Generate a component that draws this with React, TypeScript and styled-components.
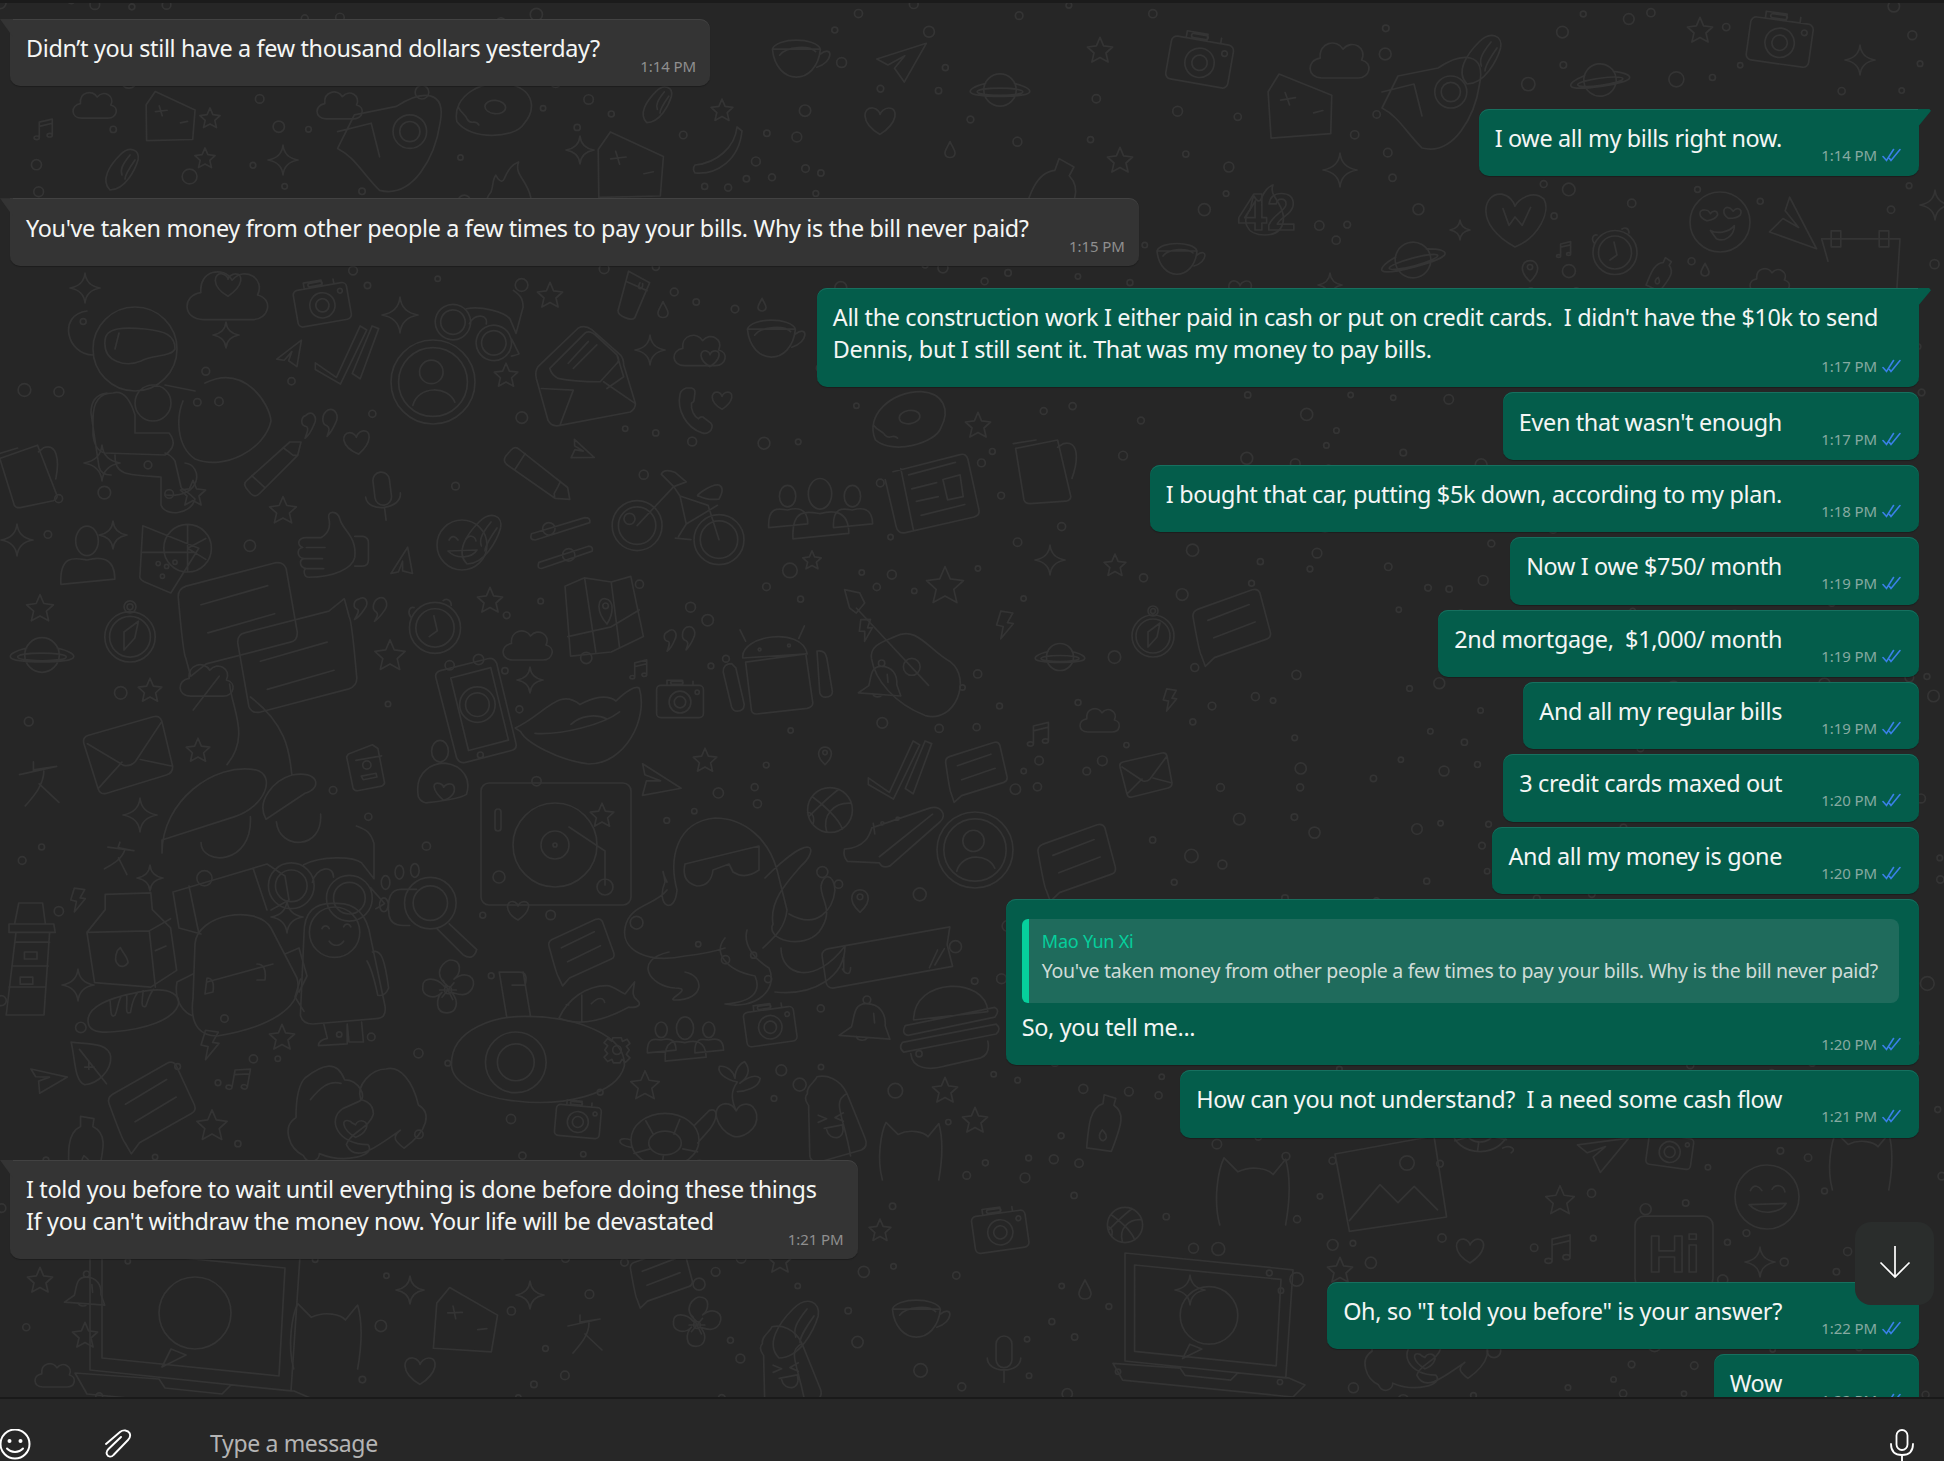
import React from "react";
import styled, { createGlobalStyle } from "styled-components";

const c = (x: number, y: number, r: number) => `M${x - r} ${y}a${r} ${r} 0 1 0 ${2 * r} 0a${r} ${r} 0 1 0 ${-2 * r} 0`;
const e = (x: number, y: number, a: number, b: number) => `M${x - a} ${y}a${a} ${b} 0 1 0 ${2 * a} 0a${a} ${b} 0 1 0 ${-2 * a} 0`;
const rr = (x: number, y: number, w: number, h: number, r: number) =>
  `M${x + r} ${y}h${w - 2 * r}a${r} ${r} 0 0 1 ${r} ${r}v${h - 2 * r}a${r} ${r} 0 0 1 ${-r} ${r}h${-(w - 2 * r)}a${r} ${r} 0 0 1 ${-r} ${-r}v${-(h - 2 * r)}a${r} ${r} 0 0 1 ${r} ${-r}Z`;

const person = (x: number, y: number, s: number) =>
  e(x, y - 22 * s, 13 * s, 17 * s) + `M${x - 30 * s} ${y + 28 * s}C${x - 32 * s} ${y - 8 * s} ${x - 12 * s} ${y - 2 * s} ${x} ${y}C${x + 14 * s} ${y - 4 * s} ${x + 32 * s} ${y - 4 * s} ${x + 32 * s} ${y + 22 * s}Z`;

const S: Record<string, string> = {
  star: "M0-42L12-14L42-10L20 10L27 40L0 25L-27 40L-20 10L-42-10L-12-14Z",
  sparkle: "M0-50Q4-8 50 0Q4 8 0 50Q-4 8-50 0Q-4-8 0-50Z",
  heart: "M0 36C-52 6-42-34-17-30C-6-28 0-18 0-14C2-20 10-30 22-30C46-30 46 6 0 36Z",
  cloud: "M-30 30C-56 30-56 0-33-3C-36-30-5-36 5-18C20-36 46-20 36 0C56 5 50 30 30 30Z",
  drop: "M0-42C15-10 28 5 25 18C20 44-20 44-25 18C-28 5-15-10 0-42Z",
  planet: c(0, 0, 27) + "M-24 -11C-44-6-52 0-49 4C-44 13 44 13 49 4C52 0 44-6 24-11" + e(0, 3, 38, 6),
  camera: rr(-45, -28, 90, 62, 8) + "M-25-28v-10h30v10M25-28v-8" + c(0, 4, 21) + c(0, 4, 11) + c(33, -15, 4) + rr(-18, -36, 24, 6, 3),
  check: "M-48 12L-16 34L20-44L30-38L-10 44L-48 22ZM8 28L20 36L48-40L38-44Z",
  paperplane: "M-46 6L46-42L16 42L-8 18L8-10L-22 14Z",
  chat: "M-42-30L40-44Q48-45 50-38L55 20Q55 28 48 29L-30 42L-45 52L-48 35Q-50 32-50-20Q-50-28-42-30ZM-30-12L32-24M-26 14L36 2",
  person: person(0, 0, 1.5),
  group: person(0, 4, 1) + person(-36, 0, .7) + person(36, 0, .7),
  pin: "M0 48C-30 20-36 0-30-18C-20-46 20-46 30-18C36 0 30 20 0 48Z" + c(0, -12, 11),
  profile: c(0, 0, 50) + c(0, 0, 41) + c(-2, -12, 14) + "M-24 28C-18 4 18 4 26 24",
  bolt: "M-14-46L26-40L8-8L28-5L-14 46L-6 5L-28 0Z",
  note: "M-22 30V-30L28-42V20M-22-14L28-26" + e(-32, 30, 10, 7) + e(18, 20, 10, 7),
  quotes: "M-32-22C-18-36-4-18-14 0C-20 14-28 26-34 30C-28 14-26 8-30 4C-46 2-44-18-32-22ZM18-34C34-40 44-22 36-6C30 8 24 18 16 26C22 10 22 6 16 2C2-2 4-26 18-34Z",
  pencil: "M30-50L50-50L44-26L-24 42Q-32 50-40 42L-48 32Q-54 24-46 18ZM-38 10L-14 32M18-40L26-34L36-26L42-26",
  mic: rr(-18, -50, 36, 72, 18) + "M-38 0C-38 36 38 36 38 0M0 30V55",
  thumb: "M-30-12H-6C4-18 10-28 6-44C4-56 20-56 24-42C28-24 52-14 48 20C44 38 14 52-26 52C-34 52-36 40-30 38C-42 36-42 24-34 22C-46 20-46 6-36 4C-46 0-44-12-30-12ZM-30 4H0M-34 22H-4M-30 38H-2M48-14H62Q70-12 70-4V24Q70 34 60 34H48",
  mug: "M-44-36L26-50L48 44Q48 50 40 52L-20 56Q-28 56-30 50ZM26-38L36-44C60-50 62-20 50 14M-48-44L-10-50",
  cocktail: "M-46-46L34-14L-6 50L-44 34Q-52 30-50 24ZM-46-8L28-8" + c(18, -14, 34) + "M18-14L18-46M18-14L44-28M18-14L44 2M18-14L18 18" + c(-24, 8, 3) + c(-12, 12, 3) + c(0, 6, 3) + c(-18, 26, 3),
  compass: c(0, 8, 42) + c(0, 8, 34) + c(0, -42, 10) + c(0, -42, 5) + "M-10 30L-10 0L14-18L8 10Z",
  clock: c(0, 5, 44) + c(0, 5, 33) + "M-2-16L4 10L-10 20M-36-30C-44-32-48-22-42-14M14-42C20-46 28-44 28-34",
  cup: "M-46-18C-40 44 28 44 34-18ZM-46-18C-40-38 28-38 34-18ZM-34-8C-22-24 16-24 26-14M34-10C56-26 56 4 28 12",
  envelope: "M-48-26L30-44Q38-46 40-38L50 16Q50 24 42 26L-30 44Q-38 46-40 38L-54-16Q-56-24-48-26ZM-50-16L-8 12Q0 14 6 8L40-38M-40 38L-10 8M50 16L12 6",
  bigenvelope: "M-50-4L-2-50Q6-54 14-48L48-18Q52-14 52-6L66 40Q66 46 60 50L-24 66Q-34 68-38 60L-52 10Q-54 2-50-4ZM-36-2L6-44Q12-48 20-40L44-18Q48-12 44-8L24 14Q-8 14-26 10Q-34 6-36-2ZM-46 22L-8 24L-24 66M28 14L66 40M-14-8L10-34M-8-2L20-30M44-18L52 8L32 22",
  handset: "M-20-50L-8-50Q0-48 0-40L-2-24Q-2-18-8-16C-10 0-2 14 8 20Q12 14 18 16L36 30Q42 36 36 46Q28 56 16 52C-20 40-42 0-34-36Q-32-46-20-50Z",
  bike: c(-55, 20, 32) + c(-55, 20, 24) + c(50, 38, 32) + c(50, 38, 24) + "M-55 20L-8-30L-24-46Q-20-54-6-48L8-36L-8-30L0-18L36-6M0-18L8 18L48-6M24-18C16-16 40-34 50-32Q58-28 50-14Q36-12 24-18M36-6L50 38M8 18L-2 34M-6 36L14 38",
  news: "M-50-26L36-48Q44-50 46-42L60 22Q62 30 54 32L-34 52Q-44 54-46 44L-60-16M-40-30L-24 48M-30-22L30-38M-26-4L6-12M-20 12L8 6M-14 30L42 16M14-16L36-22L40 6L20 10Z",
  sliders: "M-46-10L40-36Q50-36 48-28L-40 0Q-50 0-46-10Z" + c(-18, -18, 10) + "M-34 36L46 10Q54 10 52 18L-30 46Q-38 46-34 36Z" + c(14, 24, 10),
  map: "M-50-34L-22-46L16-40L44-48L62 38L16 60L-42 66ZM-22-46L-6 60M16-40L28 54M-46 38L16 24L56 0M10 20C-6 2-4-18 8-16C20-14 20 4 10 20Z" + c(8, -6, 4),
  guitar: "M-66-66L-48-62L-42-50L-52-38L-60-44ZM-52-44L34 48M-6 -10C20-24 34 6 60 20C86 40 66 94 30 84C-6 70-30 42-34 16C-36 0-20-4-6-10Z" + c(14, 26, 10),
  android: "M-42-34L-50-50M34-38L42-56M-46-10C-50-42 38-56 46-16ZM-42-4L44-16L54 54Q54 60 46 62L-26 70Q-34 70-34 62ZM-74 10Q-74-2-62-2L-56 4L-44 56Q-44 66-54 66Q-60 66-62 60ZM60-20Q72-22 74-10L82 38Q82 46 72 46Q66 46 64 40Z" + c(-22, -22, 2) + c(20, -28, 2),
  bell: c(4, -42, 8) + "M2-34C-24-34-22-6-28 14L-54 32L52 40L42 12C44-12 32-34 2-34ZM-18 34C-16 44 0 44 4 38M18-14L20 6",
  lips: "M-72 0C-40-14-24-46 0-26C14-34 30-38 40-30C50-40 62-48 66-44C76-10 50 40 10 40C-24 36-60 16-66 4ZM-50 6C-20 8 26-4 44-18M-10-4C0-14 18-16 30-10",
  turntable: rr(-74, -62, 150, 122, 8) + c(0, 0, 42) + c(0, 0, 14) + c(0, 0, 2) + "M14-18L50 6V40" + c(50, 42, 8) + c(-56, 32, 6) + rr(-60, -36, 6, 22, 3),
  octopus: "M-48 10C-56-20-50-58-10-62C20-62 44-40 52-10L62 30C60 50 46 60 38 68M-48 10C-50 36-70 26-60 2C-62-14-64-10-58 2M-58 10C-70 26-96 24-100 48C-104 70-78 84-40 76C-22 74-6 70 0 68M-40-16L34-34L34-10Q20 0 8-8L4-16L-12-10Q-14 6-28 6Q-44 2-40-16ZM-56 72C-92 80-76 106-50 108C-30 108-60 120-50 120C-20 120-20 96-40 92M0 58C-12 72 0 90 30 96C36 110 30 122 0 124C30 130 54 110 44 88C28 78 18 64 22 50M64 34C92 50 108 30 110 10C108-8 98-6 96 6C96 22 110 30 94 52C78 70 40 60 48 44C44 20 64 0 76-14C94-30 90-52 40-2M56 68C56 96 90 106 120 66C120 96 90 116 50 112",
  ball: c(0, 0, 40) + "M-32-24C-10-8 16 16 22 34M-38 12C-10-16 6-30 16-37M-6 38C-14 10 6-14 38-12M-30 24C-26 8-36 4-40 4",
  shoe: "M-60 12C-30 10-26-10-24-16L52-42C66-46 76-34 66-24L0 34Q-10 38-14 30L-56 28Q-62 22-60 12ZM-22-22L-20-8M-14 22L56-34" + c(-10, -22, 2) + c(10, -28, 2),
  audio: "M-90-2L88-34L84-8L92 24L-84 56Q-92 56-94 48L-100 8Q-100 0-90-2ZM-68 10V30M-70 28C-64 38-58 36-58 26M70 0L58 26M80-2L66 22",
  burger: "M-52 0C-52-62 52-62 54 -12ZM-64 8L64-18Q72-14 64-4L-60 22Q-70 20-64 8ZM-68 32L66 6Q74 12 66 20L-66 46Q-74 40-68 32ZM-56 48C-54 70-30 72-8 66L44 54C54 50 56 40 54 30",
  fish: "M-60 30C-46 0-16-24 20-24C30-24 40-14 50-10L66-30C64-16 60-8 70 0C78 6 74 14 56 12C30 26-20 48-60 30ZM-22-8V36M-48 8L-44 8M-6 6C6-6 14-4 16 4",
  gear: c(0, 0, 12) + "M-12-34L12-34L15-24L28-30L36-18L26-10L34 0L26 12L36 22L24 34L14 26L8 36H-10L-14 26L-26 32L-36 20L-26 10L-34 0L-26-12L-36-20L-26-32L-14-24Z",
  submarine: "M-80 10C-80-30-30-42 0-42C60-42 110-20 108 12C100 44 40 56-10 50C-50 46-80 30-80 10Z" + c(-10, 8, 33) + c(-10, 8, 20) + "M-20-42L-28-90H-6Q4-90 0-76H-14M-2-90L6-42",
  turtle: e(0, 0, 46, 36) + e(0, 4, 22, 16) + "M-26-26L-16-8M20-28L12-8M-42 18L-20 12M44 16L24 12M-4 34L-2 20M40-20L60-40C72-44 72-30 60-14L44 4M-46 0C-64-6-68 6-46 10M38 30C50 24 62 32 52 38",
  plant: "M-4 60C-30 50-44 10-16 6C-8 6-2 10 2 18C8 4 30 0 36 24C40 50 10 66-4 60ZM2 18C-6 0-8-14 4-30C-16-34-30-46-26-56C-12-58-2-46 0-36C0-52 10-62 16-64C28-50 20-36 8-28C24-40 36-42 42-36C40-20 16-14 4-14",
  ice: "M-30-72C-36-60-48-56-46-44C-54-36-46-28-44-24L-42 60Q-40 72-26 70L44 50Q56 44 50 30L20-44C8-70-16-76-30-72ZM20-44C-6-30 14-10 26 60M-28-8L-14-2L-28 4M14-12L0-4L14 2M-18 14L12 8C20 34-10 36-14 16",
  laptop: "M-70-60L70-46L64 44L-70 30ZM-62-50L60-38L56 34L-62 22ZM-80 32L-72 46L70 60L80 50L66 44L24 40L18 46L-20 42L-24 36Z" + c(0, -8, 24) + "M-16 16L-22 28L-6 20Z",
  astronaut: c(0, -36, 42) + "M-30-44C-30-58-10-58 10-56C30-54 40-50 40-36C36-28 16-30 6-24C-8-18-32-22-30-44ZM-16-52L-20-36M-42-30C-68-30-78-70-48-74M-28 8Q-44 10-44 28L-36 82Q-34 90-24 90M-22 8Q-8 4 0 30V48H34Q44 60 30 70L-30 68Q-40 66-42 50V34Q-42 8-22 8ZM-20 70C-20 90-10 90 26 92V120C30 132 56 130 60 114C50 104 46 104 46 102L40 76C36 70 30 68 30 68M30 110C68 114 68 80 50 78M30 0L60 6M70 -2C110-22 135 20 136 36C130 64 90 86 60 74C40 60 42 30 48 16" + c(18, 18, 18),
  scooter: "M-8-70C-6-50 8-30-10-8M-16-76L-36-50M8-60C40-36 38-10 40 0M-60 60C-60 20-20-10 12-4C28 0 20 24-4 32L-60 50ZM40 0C60-4 64 10 50 14L20 34C12 20 26 4 40 0ZM-30 52C-30 70 10 70 8 32M28 36C30 58 64 58 62 30",
  passport: "M-36-24L16-44L28-36L42 36Q44 42 36 46L-16 56Q-24 56-26 50L-40-18ZM-20-10L36-20M-8 24L24 18L26 26L-4 32Z" + c(4, 0, 9),
  heartperson: e(0, -48, 14, 18) + "M-36 28C-44-16-10-28 8-28C40-24 52 0 44 24C36 30 0 36-24 38Q-32 36-36 28ZM6 34C-14 16-14 2 0 6C4 8 6 10 6 12C10 6 24 2 24 16C24 26 12 32 6 34Z",
  phone: "M-40-60L24-76Q32-78 36-70L62 38Q64 46 56 48L-6 64Q-14 66-18 58L-46-50Q-48-58-40-60ZM-26-50L28-64L52 34L-2 48Z" + c(14, 54, 4) + c(10, -14, 24) + c(10, -14, 16),
  translate: "M-20-40V-26L20-32M-44-18L20-32M-2-24C-2 0-20 20-34 36M-10-2L24 30",
  glasses: c(-44, 18, 26) + c(-44, 18, 18) + c(22, 32, 26) + c(22, 32, 18) + "M-30-6C-10-16 26-16 36-8L50 10L50-30C46-44 40-46 30-50M-20 14C-16-4 4-6 4 8M46 20L62 38Q60 40 52 44",
  backpack: "M-42-4C-40-34 20-44 34-20L60 30C68 60 30 80-20 88C-34 88-48 80-44 50ZM-44 26L-60 34C-64 56-50 66-44 68M48 6L62 0L70 28L62 44M-30 34L36 16M-30 30Q-22 30-24 44L-32 46ZM20 16Q30 16 28 32H20M-64-56L30-84L48-72L52-48L34-38M-64-56L-58-20L-36-14M-48-62L-38-14M16-80L30-38",
  magnify: c(12, -8, 30) + c(12, -8, 20) + "M34 16L66 46Q62 60 50 52L20 22M-22-24H-4M-22-24Q-40-24-36 6Q-34 18-20 18H-12" + e(-24, -44, 5, 8) + e(-6, -46, 5, 8) + e(-40, -32, 5, 8) + e(-42, -6, 5, 8),
  lighthouse: "M-16-70H18L22-40H-22ZM-30-40H34L36-28H-30ZM-20-28L28-28L20 90H-34ZM-22-14H28M-26 20H26M-30 50H22M-8 0L10 0L10 10L-8 10ZM-14 36L4 36L4 46L-14 46Z",
  milk: "M-30-60L30-62L32-40L56-16L64 40L30 62L-44 56L-54-10L-30-40ZM-54-10L28-12L56-28M28-12L36 62M-14 14C-22 34-6 40 0 30C0 22-8 16-10 10ZM36 14L50 8",
  astro2: c(-6, -42, 28) + "M-40-40Q-40-76-6-74Q28-76 34-36L50 40Q52 54 40 54L-30 60Q-42 60-44 50ZM-44 10L-50 30L-40 46M36-20C46-24 50-10 54 20Q50 30 42 28Q36 0 30-10M-18 60L-14 76Q-24 78-24 84L8 82L8 60M8 60L10 80L26 80L24 58M-20-46C-18-50-14-50-12-46M4-48C6-52 10-52 12-48M-12-32C-8-26 0-26 4-32",
  flower: c(0, 0, 6) + "M0-6C-30-30-4-50 4-50C24-50 22-28 10-18C30-34 50-20 40-2C30 14 14 6 6 4C20 20 14 38-2 38C-22 38-20 14-10 4C-24 18-44 10-42-6C-42-22-20-22-6-6ZM-14 0H14M-8-16L8 16M10-12L-10 12",
  bread: "M-70 20C-74-4-40-20 20-30C60-36 76-22 70-6C60 16 20 30-30 34C-50 36-68 34-70 20ZM-36-16C-34 0-36 14-28 8C-24 0-24-12-18-22M-10-24C-8-8-14 8-4 4C-2-4-2-16 8-28M16-30C14-14 12-2 20-6C22-10 24-22 32-32",
  leaf: "M-42-44C-10-40 30-44 34-16C36 10 10 36-16 38C-36 30-34-10-42-44ZM-26-30L26 36M-8-8V8M2 4H-16",
  hands: "M-6-28C-14-50-30-46-50-30C-60-20-60 6-60 14C-76 24-68 48-52 56C-46 68-34 62-34 54C-6 66 30 56 20 44C-14 44-26 16-8 4L10-4C20-8 10-28-6-28ZM-44-6C-34-18-24-28-10-24M12-6C6-22 24-40 40-40C56-44 70-26 76 0C90 8 88 28 60 48C50 40 46 36 56 28C30 46 6 66-4 44C0 30 22 26 26 10C26-4 12-6 12-6ZM6 36C-10 26-10 14 0 18C2 20 6 22 6 22C10 14 22 18 18 26C14 34 10 34 6 36Z",
  smiley: c(0, 0, 50) + "M-26-10C-20-22-12-16-8-10M8-12C14-22 26-18 28-8M-28 12C-10 30 20 26 30 10Z",
  love: c(0, 0, 50) + "M-22-2C-38-8-36-22-24-20C-18-20-18-16-16-14C-12-20-4-20-4-12Q-8-4-22-2ZM14-6C2-14 6-26 14-24C18-24 20-20 22-18C28-26 38-22 34-12Q28-6 14-6ZM-16 14C-6 20 14 18 24 6C24 24 6 34-6 28Z",
  donut: "M-50 20C-60-14-20-42 20-36C50-30 56-6 40 16C30 36-30 44-50 20Z" + e(0, -4, 14, 9) + "M-50 0C-44 10-40 8-36 16C-30 24-26 14-20 22",
  rocket: "M10-40C40-60 70-60 62-20C56 20 30 70-10 60C-30 40-40 20-60 10L-40-30ZM-60-10L-20-20L-10 20" + c(26, -10, 20) + c(26, -10, 12),
  flame: "M0 50C-40 50-46 20-30 0C-26-10-28-20-22-28C-16-16-10-16-8-22C0-40 6-46 16-50C8-30 30-20 36 8C40 30 30 50 0 50Z",
  banana: "M-44 46C0 50 44 20 50-38L40-46C36-6 0 26-44 30Q-50 38-44 46Z",
  hand: "M-30 40C-50 20-30-10-10-30C10-50 30-40 26-20C20 0 0 40-30 40ZM10-30C-6-10-10 0-6 10M20-20C6 0 0 10 0 18",
  doc: "M-40-44L40-30L50 24L-32 48L-50-16ZM-26-20L-16-4M-30-8L-10-16M20 0L32-6",
  card: rr(-50, -46, 100, 92, 12),
  bottle: "M-8-60L16-56L14-42C38-30 36-10 22 50H-28C-30 10-34-30-8-42ZM-2 10C-14 30 6 38 8 24C8 16 2 14-2 10Z",
  tube: "M-26-54L22-28L-12 52C-20 60-50 48-50 36ZM-30-30L16-10M0-28C-10-10 8-10 6-26",
  mountain: "M-60-40L50-60L64 30L-44 46ZM-44 34L-10-6L10 14L28-4L54 22" + c(20, -30, 8),
  cat: "M-46 50C-56 14-48-30-40-46L-20-26C0-36 24-30 30-22L48-44C56-16 54 16 48 50",
  wheart: "M0 50C-70 12-52-42-22-38C-10-36-2-26 0-18C6-30 30-46 48-30C60-10 40 34 0 50ZM-20-14L-10 14L0 0L12 14L26-16",
  dumbbell: "M-30-14L30-14M-36-24H-24V-4H-36ZM24-24H36V-4H24ZM-40 14L-48-14L50-14L46 50",
};

type Placement = [string, number, number, number, number?];
const PLACEMENTS: Placement[] = [
  ["astronaut", 135, 385, 100], ["cloud", 228, 295, 82], ["heart", 228, 284, 34], ["camera", 322, 303, 60, -10], ["glasses", 485, 318, 68, 15], ["check", 347, 355, 66], ["paperplane", 290, 355, 30, -10], ["profile", 433, 382, 84], ["quotes", 320, 425, 44], ["heart", 357, 442, 34, -8], ["pencil", 273, 470, 56], ["mic", 383, 495, 46, -7], ["hand", 485, 540, 60], ["smiley", 462, 545, 50], ["mug", 27, 475, 56, -8],
  ["sparkle", 102, 463, 36], ["sparkle", 85, 288, 30], ["sparkle", 400, 315, 36], ["sparkle", 226, 335, 26], ["star", 193, 493, 30], ["star", 283, 510, 32], ["star", 506, 375, 28], ["thumb", 325, 545, 62], ["person", 87, 560, 58], ["sparkle", 113, 535, 28], ["cocktail", 175, 558, 70], ["paperplane", 402, 565, 30, -30], ["chat", 235, 615, 110, -5], ["chat", 300, 660, 110, 175], ["compass", 130, 632, 60], ["quotes", 370, 610, 40, 10], ["clock", 435, 625, 58], ["star", 40, 608, 32], ["star", 490, 600, 30], ["star", 390, 655, 36], ["star", 150, 690, 28], ["planet", 42, 655, 64], ["cloud", 207, 680, 54], ["phone", 470, 715, 74], ["sparkle", 17, 540, 32],
  ["envelope", 130, 755, 84, -3], ["scooter", 240, 775, 130], ["star", 198, 750, 28], ["passport", 365, 765, 46], ["heartperson", 440, 780, 60], ["translate", 45, 785, 58], ["translate", 122, 860, 40, 20], ["sparkle", 140, 815, 34], ["sparkle", 150, 878, 26], ["bolt", 78, 900, 26], ["glasses", 330, 870, 88], ["backpack", 237, 948, 100], ["magnify", 420, 910, 86], ["lighthouse", 30, 952, 70], ["milk", 128, 940, 76], ["astro2", 340, 970, 90], ["flower", 448, 990, 60], ["sparkle", 78, 985, 32], ["sparkle", 287, 917, 32], ["bread", 133, 1010, 64], ["bolt", 210, 1045, 32], ["star", 282, 1037, 30], ["star", 212, 1125, 36], ["hands", 350, 1105, 90], ["leaf", 93, 1065, 52], ["paperplane", 45, 1078, 36, 40], ["chat", 150, 1105, 76, -20], ["note", 240, 1080, 30, 10], ["submarine", 525, 1055, 92], ["bottle", 85, 1150, 56],
  ["bigenvelope", 580, 370, 84], ["tube", 640, 295, 44], ["star", 550, 295, 30], ["drop", 663, 310, 20], ["drop", 762, 305, 16], ["cup", 775, 340, 60], ["sparkle", 650, 350, 30], ["cloud", 700, 350, 52], ["heart", 710, 358, 24], ["handset", 695, 410, 44], ["heart", 722, 400, 26], ["paperplane", 580, 450, 26, 70], ["pencil", 535, 475, 60, 80], ["bike", 680, 510, 78], ["group", 820, 510, 90], ["news", 932, 492, 78], ["sliders", 560, 540, 62], ["map", 600, 610, 70], ["guitar", 900, 645, 84], ["star", 945, 585, 44], ["android", 775, 665, 70], ["cloud", 528, 645, 50], ["quotes", 680, 640, 38], ["note", 640, 670, 24], ["bell", 880, 680, 40], ["sparkle", 530, 680, 26], ["camera", 680, 700, 52], ["star", 812, 560, 22], ["donut", 910, 420, 74, -8], ["star", 978, 425, 30], ["bolt", 866, 630, 24, -10], ["bolt", 1005, 625, 30],
  ["lips", 580, 728, 90], ["turntable", 555, 845, 100], ["star", 602, 815, 28], ["paperplane", 655, 780, 44, 60], ["star", 705, 760, 28], ["pin", 825, 755, 20], ["check", 900, 770, 66], ["chat", 975, 770, 56, -8], ["ball", 830, 810, 56], ["shoe", 890, 840, 76], ["profile", 975, 850, 76], ["audio", 890, 950, 68], ["pin", 860, 900, 26], ["heart", 518, 910, 28], ["chat", 580, 950, 58, -15], ["burger", 950, 1020, 70], ["fish", 595, 1000, 60], ["camera", 770, 1025, 56, -8], ["bell", 865, 1020, 48], ["group", 685, 1040, 66], ["gear", 617, 1050, 36], ["star", 645, 1085, 34], ["plant", 735, 1100, 60], ["turtle", 665, 1140, 74], ["camera", 578, 1120, 50, 5], ["ice", 835, 1120, 60], ["cat", 910, 1150, 60], ["star", 975, 1120, 30], ["star", 945, 1090, 30], ["octopus", 725, 880, 100],
  ["cloud", 95, 105, 44], ["doc", 170, 120, 54, 15], ["rocket", 388, 140, 84], ["donut", 495, 110, 74, 5], ["flame", 509, 192, 60], ["doc", 630, 170, 72, 15], ["banana", 717, 150, 50], ["star", 210, 118, 24], ["star", 205, 158, 24], ["sparkle", 283, 160, 30], ["cloud", 340, 105, 46], ["hand", 125, 170, 50], ["hand", 660, 105, 44], ["note", 45, 130, 26], ["star", 722, 110, 26], ["sparkle", 580, 150, 28],
  ["cup", 800, 60, 60], ["planet", 1000, 90, 60], ["star", 1100, 50, 30], ["paperplane", 900, 60, 50, 10], ["camera", 1200, 60, 70, 10], ["bottle", 1050, 200, 70, 20], ["heart", 880, 120, 40], ["drop", 950, 150, 20], ["star", 1000, 220, 30], ["planet", 1413, 260, 66, -15], ["sparkle", 1340, 170, 34], ["rocket", 1430, 100, 80], ["doc", 1300, 110, 70, 12], ["hand", 1485, 60, 60], ["cloud", 1340, 60, 60], ["planet", 1600, 80, 60, -8], ["camera", 1780, 40, 70, 8], ["sparkle", 1860, 60, 30], ["star", 1700, 30, 30], ["wheart", 1515, 217, 60], ["love", 1720, 222, 60], ["paperplane", 1793, 223, 56, 90], ["clock", 1615, 250, 50], ["note", 1565, 250, 20], ["bottle", 1660, 275, 30, 25], ["dumbbell", 1860, 250, 80], ["sparkle", 1460, 230, 20], ["sparkle", 1935, 205, 30], ["flame", 1265, 210, 50], ["cloud", 1770, 280, 40], ["pin", 1530, 270, 24], ["drop", 1705, 270, 16], ["cup", 1180, 260, 50], ["star", 1120, 160, 30], ["heart", 1240, 290, 30], ["sparkle", 1330, 285, 24],
  ["mug", 1042, 470, 60], ["planet", 1060, 657, 50], ["compass", 1153, 632, 50], ["sparkle", 1050, 560, 30], ["envelope", 1147, 775, 50], ["chat", 1075, 860, 70, -10], ["cloud", 1100, 720, 40], ["note", 1040, 735, 30], ["star", 1115, 565, 26], ["bolt", 1170, 700, 24], ["chat", 1230, 625, 70, -10],
  ["laptop", 195, 1325, 150], ["cat", 325, 1335, 68], ["doc", 465, 1325, 68, 20], ["translate", 590, 1335, 50], ["flower", 697, 1325, 56], ["hand", 800, 1330, 70], ["sparkle", 410, 1290, 28], ["sparkle", 530, 1295, 28], ["star", 85, 1335, 30], ["star", 40, 1280, 30], ["cloud", 55, 1375, 40], ["bell", 85, 1290, 38], ["heart", 420, 1370, 40], ["chat", 660, 1275, 56, -10], ["cup", 920, 1320, 60], ["camera", 1000, 1230, 60, -8], ["bottle", 1104, 1125, 50, 8], ["cat", 1252, 1190, 70], ["mountain", 1389, 1190, 90], ["sparkle", 1190, 1290, 30], ["laptop", 1209, 1325, 120], ["mic", 1004, 1358, 44], ["smiley", 1767, 1197, 64], ["card", 1674, 1252, 78], ["sparkle", 1760, 1262, 30], ["cat", 1860, 1160, 60], ["star", 1340, 1270, 30], ["heart", 1470, 1250, 36], ["star", 1560, 1200, 34], ["ball", 1125, 1225, 44], ["drop", 1085, 1290, 24], ["star", 880, 1230, 26], ["star", 780, 1260, 30], ["note", 1560, 1250, 36], ["paperplane", 1600, 1150, 50, 20], ["turtle", 1480, 1130, 60], ["camera", 1670, 1150, 50, 8], ["hands", 1420, 1340, 80], ["ice", 790, 1370, 60],
];

function makeDots() {
  let seed = 4217;
  const rnd = () => ((seed = (seed * 16807) % 2147483647) - 1) / 2147483646;
  const dots: [number, number, number][] = [];
  for (let i = 0; i < 9000 && dots.length < 720; i++) {
    const x = rnd() * 1944;
    const y = rnd() * 1400;
    const r = 2.6 + rnd() * rnd() * 5.5;
    const hit = PLACEMENTS.some(p => Math.hypot(p[1] - x, p[2] - y) < p[3] * .56 + r + 2) || dots.some(d => Math.hypot(d[0] - x, d[1] - y) < d[2] + r + 9);
    if (!hit) dots.push([x, y, r]);
  }
  return dots;
}
const DOTS = makeDots();

const GlobalStyle = createGlobalStyle`
  html, body { margin: 0; padding: 0; background: #fff; }
  body { font-family: "Noto Sans", "Open Sans", sans-serif; }
`;

const Window = styled.div`
  width: 1944px;
  height: 1461px;
  display: flex;
  flex-direction: column;
  background: #272727;
  border-top: 3px solid #1b1b1b;
  box-sizing: border-box;
  overflow: hidden;
`;

const Conversation = styled.main`
  position: relative;
  flex: 0 0 1394px;
  overflow: hidden;
  background: #262626;
`;

const Wallpaper = styled.svg`
  position: absolute;
  inset: 0;
  width: 1944px;
  height: 1394px;
  fill: none;
  stroke: #343434;
  stroke-width: 1.7;
  stroke-linejoin: round;
  stroke-linecap: round;
  & path { vector-effect: non-scaling-stroke; }
`;

const Column = styled.div`
  position: relative;
  display: flex;
  flex-direction: column;
  padding: 16px 25px 0 10px;
`;

const Bubble = styled.div<{ $own?: boolean; $first?: boolean; $reply?: boolean }>`
  position: relative;
  box-sizing: border-box;
  align-self: ${p => (p.$own ? "flex-end" : "flex-start")};
  margin-top: ${p => (p.$first ? "22.3px" : "5px")};
  &:first-child { margin-top: 0; }
  padding: ${p => (p.$reply ? "19.5px 41px 22.7px 16px" : "13.2px 41px 22.2px 16px")};
  background: ${p => (p.$own ? "#045d4b" : "#343434")};
  border-radius: ${p => (p.$first ? (p.$own ? "10px 0 10px 10px" : "0 10px 10px 10px") : "10px")};
  box-shadow: inset 0 1px 0 ${p => (p.$own ? "#17705f" : "#424242")}, 0 1px 1px rgba(0, 0, 0, .25);
`;

const Tail = styled.span<{ $own?: boolean }>`
  position: absolute;
  top: 0;
  width: 13px;
  height: 18px;
  background: ${p => (p.$own ? "#045d4b" : "#343434")};
  ${p => (p.$own ? "right: -12px;" : "left: -10px;")}
  clip-path: ${p => (p.$own ? "polygon(0 0, 85% 0, 100% 12%, 0 100%)" : "polygon(0 0, 100% 0, 100% 100%)")};
`;

const Body = styled.div`
  display: grid;
`;

const Text = styled.div`
  grid-area: 1 / 1;
  font-size: 23.4px;
  line-height: 32px;
  letter-spacing: -0.34px;
  color: #f4f6f5;
  white-space: pre;
`;

const Spacer = styled.span<{ $own?: boolean }>`
  display: inline-block;
  width: ${p => (p.$own ? "96px" : "69px")};
`;

const Meta = styled.div<{ $own?: boolean }>`
  grid-area: 1 / 1;
  align-self: end;
  justify-self: end;
  display: flex;
  align-items: center;
  gap: 5px;
  margin: 0 ${p => (p.$own ? "-24px" : "-27px")} ${p => (p.$own ? "-10px" : "-11px")} 0;
  font-size: 15px;
  line-height: 18px;
  letter-spacing: -0.1px;
  color: ${p => (p.$own ? "#86aaa1" : "#8f8f8f")};
`;

const ReplyBox = styled.div`
  box-sizing: border-box;
  height: 84px;
  margin: 0 -21px 8px 0;
  padding: 10px 21px 0 13px;
  background: #1f6b5c;
  border-left: 7px solid #06cf9c;
  border-radius: 6px 8px 8px 6px;
`;

const ReplyName = styled.div`
  font-size: 18px;
  line-height: 24px;
  letter-spacing: -0.2px;
  color: #06cf9c;
`;

const ReplyQuote = styled.div`
  margin-top: 4px;
  font-size: 19.5px;
  line-height: 28px;
  letter-spacing: -0.28px;
  color: #cfdcd8;
  white-space: pre;
`;

const ScrollDown = styled.button`
  position: absolute;
  top: 1219px;
  left: 1855px;
  width: 79px;
  height: 83px;
  display: flex;
  align-items: center;
  justify-content: center;
  padding: 0 0 4px;
  border: 0;
  border-radius: 16px;
  background: #2a2d2c;
  color: #fff;
`;

const Composer = styled.footer`
  flex: 1;
  display: flex;
  align-items: flex-start;
  background: #272727;
  border-top: 2px solid #1a1a1a;
  padding-top: 30px;
  overflow: hidden;
`;

const IconSlot = styled.div<{ $w: number; $ml?: number }>`
  flex: 0 0 ${p => p.$w}px;
  margin-left: ${p => p.$ml ?? 0}px;
  height: 36px;
  color: #fff;
`;

const Placeholder = styled.div`
  flex: 1;
  margin-left: 78px;
  margin-top: -2px;
  font-size: 23px;
  line-height: 32px;
  letter-spacing: -0.34px;
  color: #b4b4b4;
`;

type Msg = { own?: boolean; first?: boolean; tail?: boolean; lines: string; time: string; reply?: boolean };
const QUOTE = "You've taken money from other people a few times to pay your bills. Why is the bill never paid?";
const MSGS: Msg[] = [
  { first: true, tail: true, lines: "Didn\u2019t you still have a few thousand dollars yesterday?", time: "1:14 PM" },
  { own: true, first: true, tail: true, lines: "I owe all my bills right now.", time: "1:14 PM" },
  { first: true, tail: true, lines: QUOTE, time: "1:15 PM" },
  { own: true, first: true, tail: true, lines: "All the construction work I either paid in cash or put on credit cards.  I didn't have the $10k to send\nDennis, but I still sent it. That was my money to pay bills.", time: "1:17 PM" },
  { own: true, lines: "Even that wasn't enough", time: "1:17 PM" },
  { own: true, lines: "I bought that car, putting $5k down, according to my plan.", time: "1:18 PM" },
  { own: true, lines: "Now I owe $750/ month", time: "1:19 PM" },
  { own: true, lines: "2nd mortgage,  $1,000/ month", time: "1:19 PM" },
  { own: true, lines: "And all my regular bills", time: "1:19 PM" },
  { own: true, lines: "3 credit cards maxed out", time: "1:20 PM" },
  { own: true, lines: "And all my money is gone", time: "1:20 PM" },
  { own: true, reply: true, lines: "So, you tell me...", time: "1:20 PM" },
  { own: true, lines: "How can you not understand?  I a need some cash flow", time: "1:21 PM" },
  { first: true, tail: true, lines: "I told you before to wait until everything is done before doing these things\nIf you can't withdraw the money now. Your life will be devastated", time: "1:21 PM" },
  { own: true, first: true, tail: true, lines: "Oh, so \"I told you before\" is your answer?", time: "1:22 PM" },
  { own: true, lines: "Wow", time: "1:22 PM" },
];

const Ticks = () => (
  <svg width="20" height="14" viewBox="0 0 20 14" fill="none" stroke="#3a80e8" strokeWidth="1.6" strokeLinecap="round">
    <path d="M1 8.5L4.5 12.5L11.5 1.5M7.5 10.5L9 12.5L18 1.5" />
  </svg>
);

export default function App() {
  return (
    <>
      <GlobalStyle />
      <Window>
        <Conversation>
          <Wallpaper viewBox="0 3 1944 1394">
            {PLACEMENTS.map((p, i) => (
              <path key={i} d={S[p[0]]} transform={`translate(${p[1]} ${p[2]}) rotate(${p[4] ?? 0}) scale(${p[3] / 100})`} />
            ))}
            {DOTS.map((d, i) => (
              <circle key={i} cx={d[0]} cy={d[1]} r={d[2]} />
            ))}
            <text x="1648" y="1272" fontSize="52" fontFamily="Liberation Sans, sans-serif" fontWeight="700">Hi</text>
            <text x="1238" y="230" fontSize="52" fontFamily="Liberation Sans, sans-serif" fontWeight="700">42</text>
          </Wallpaper>
          <Column>
            {MSGS.map((m, i) => (
              <Bubble key={i} $own={m.own} $first={m.first} $reply={m.reply}>
                {m.tail && <Tail $own={m.own} />}
                {m.reply && (
                  <ReplyBox>
                    <ReplyName>Mao Yun Xi</ReplyName>
                    <ReplyQuote>{QUOTE}</ReplyQuote>
                  </ReplyBox>
                )}
                <Body>
                  <Text>
                    {m.lines}
                    <Spacer $own={m.own} />
                  </Text>
                  <Meta $own={m.own}>
                    {m.time}
                    {m.own && <Ticks />}
                  </Meta>
                </Body>
              </Bubble>
            ))}
          </Column>
          <ScrollDown aria-label="Scroll to bottom">
            <svg width="32" height="34" viewBox="0 0 32 34" fill="none" stroke="currentColor" strokeWidth="1.7">
              <path d="M16 1V32M1.500 17.500L16 32L30.500 17.500" />
            </svg>
          </ScrollDown>
        </Conversation>
        <Composer>
          <IconSlot $w={32}>
            <svg width="32" height="32" viewBox="0 0 32 32" fill="none" stroke="currentColor" strokeWidth="2" strokeLinecap="round">
              <circle cx="15" cy="15" r="14.500" />
              <circle cx="9.500" cy="12" r="2" fill="currentColor" stroke="none" />
              <circle cx="20.500" cy="12" r="2" fill="currentColor" stroke="none" />
              <path d="M7 19.500C11 24 19 24 23 19.500" />
            </svg>
          </IconSlot>
          <IconSlot $w={28} $ml={72}>
            <svg width="28" height="30" viewBox="0 0 28 30" fill="none" stroke="currentColor" strokeWidth="1.9" strokeLinecap="round">
              <path d="M2 15L16 3C19 0.500 24 1 25.500 4C27 7 25.500 9.500 24 11L9.500 26C7.500 28.500 4 28 3 25.500C2 23.500 3 21.500 4.500 20L17 8" />
            </svg>
          </IconSlot>
          <Placeholder>Type a message</Placeholder>
          <IconSlot $w={24}>
            <svg width="24" height="32" viewBox="0 0 24 32" fill="none" stroke="currentColor" strokeWidth="1.8" strokeLinecap="round">
              <rect x="6.500" y="1" width="11" height="20" rx="5.500" />
              <path d="M1 15C1 23 6 26 12 26C18 26 23 23 23 15M12 26V32" />
            </svg>
          </IconSlot>
          <IconSlot $w={30} />
        </Composer>
      </Window>
    </>
  );
}
